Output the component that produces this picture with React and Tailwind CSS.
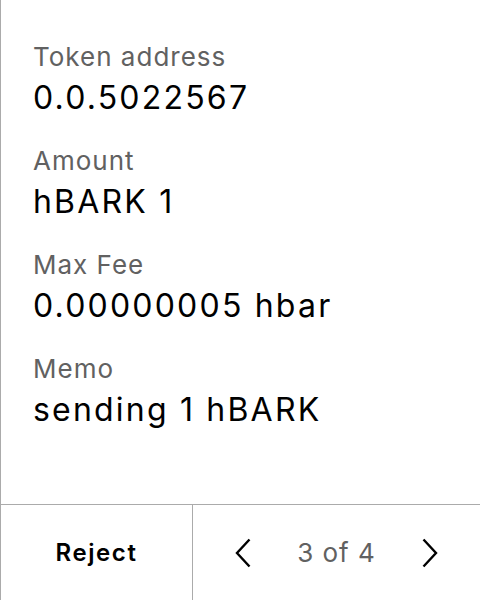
import React from "react";

const items = [
  ["Token address", "0.0.5022567"],
  ["Amount", "hBARK 1"],
  ["Max Fee", "0.00000005 hbar"],
  ["Memo", "sending 1 hBARK"],
];

export default function App() {
  return (
    <div
      className="w-[480px] h-[600px] bg-white border-l border-[#ababab] flex flex-col"
      style={{ fontFamily: "Inter, 'Noto Sans', sans-serif" }}
    >
      <div className="flex-1 flex flex-col pt-[40px] pl-[32px]">
        {items.map(([label, value]) => (
          <div key={label} className="h-[104px] flex flex-col">
            <div className="text-[26px] leading-[34px] tracking-[1px] text-[#616161]">{label}</div>
            <div className="text-[32px] leading-[40px] tracking-[2.2px] text-black mt-[4px]">{value}</div>
          </div>
        ))}
      </div>
      <div className="h-[96px] border-t border-[#ababab] flex">
        <div className="w-[192px] border-r border-[#ababab] flex items-center justify-center text-[24px] tracking-[1.6px] font-semibold text-black">
          Reject
        </div>
        <div className="flex-1 flex items-center justify-center gap-[46px]">
          <svg width="16" height="30" viewBox="0 0 16 30" fill="none" stroke="black" strokeWidth="2.4">
            <path d="M14.5 1.5 L2 15 L14.5 28.5" />
          </svg>
          <span className="text-[26px] tracking-[1px] text-[#616161]">3 of 4</span>
          <svg width="16" height="30" viewBox="0 0 16 30" fill="none" stroke="black" strokeWidth="2.4">
            <path d="M1.5 1.5 L14 15 L1.5 28.5" />
          </svg>
        </div>
      </div>
    </div>
  );
}
